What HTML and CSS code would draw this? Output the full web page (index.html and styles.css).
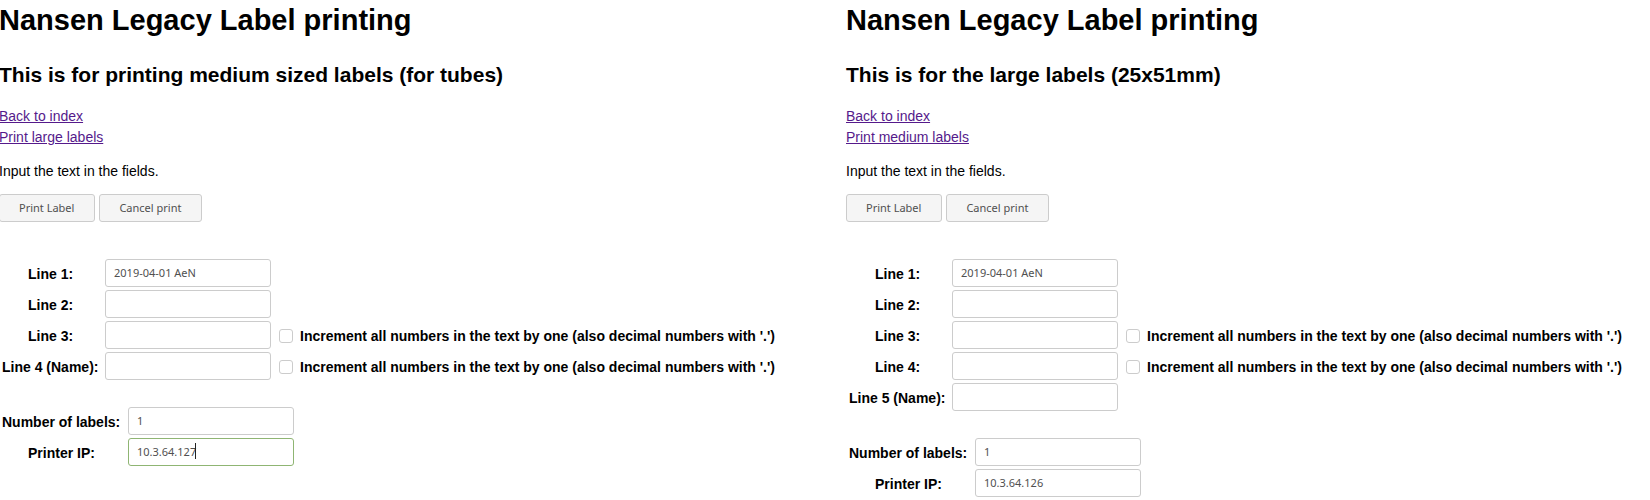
FILE: index.html
```
<!DOCTYPE html>
<html lang="en">
<head>
<meta charset="utf-8">
<title>Nansen Legacy Label printing</title>
<link rel="stylesheet" href="styles.css">
</head>
<body>
<main class="panels">
  <section class="panel">
    <h1>Nansen Legacy Label printing</h1>
    <h2>This is for printing medium sized labels (for tubes)</h2>
    <nav class="links"><a href="#index">Back to index</a><a href="#large">Print large labels</a></nav>
    <p class="intro">Input the text in the fields.</p>
    <form>
      <div class="actions"><button type="button">Print Label</button><button type="button">Cancel print</button></div>
      <table class="fields">
        <tr><th><label for="m1">Line 1:</label></th><td><input type="text" id="m1" value="2019-04-01 AeN"></td><td></td></tr>
        <tr><th><label for="m2">Line 2:</label></th><td><input type="text" id="m2"></td><td></td></tr>
        <tr><th><label for="m3">Line 3:</label></th><td><input type="text" id="m3"></td><td><label class="check"><input type="checkbox">Increment all numbers in the text by one (also decimal numbers with '.')</label></td></tr>
        <tr><th><label for="m4">Line 4 (Name):</label></th><td><input type="text" id="m4"></td><td><label class="check"><input type="checkbox">Increment all numbers in the text by one (also decimal numbers with '.')</label></td></tr>
      </table>
      <table class="fields settings">
        <tr><th><label for="mn">Number of labels:</label></th><td><input type="text" id="mn" value="1"></td></tr>
        <tr><th><label for="mip">Printer IP:</label></th><td class="active"><input type="text" id="mip" value="10.3.64.127"><span class="caret"></span></td></tr>
      </table>
    </form>
  </section>
  <section class="panel">
    <h1>Nansen Legacy Label printing</h1>
    <h2>This is for the large labels (25x51mm)</h2>
    <nav class="links"><a href="#index">Back to index</a><a href="#medium">Print medium labels</a></nav>
    <p class="intro">Input the text in the fields.</p>
    <form>
      <div class="actions"><button type="button">Print Label</button><button type="button">Cancel print</button></div>
      <table class="fields">
        <tr><th><label for="l1">Line 1:</label></th><td><input type="text" id="l1" value="2019-04-01 AeN"></td><td></td></tr>
        <tr><th><label for="l2">Line 2:</label></th><td><input type="text" id="l2"></td><td></td></tr>
        <tr><th><label for="l3">Line 3:</label></th><td><input type="text" id="l3"></td><td><label class="check"><input type="checkbox">Increment all numbers in the text by one (also decimal numbers with '.')</label></td></tr>
        <tr><th><label for="l4">Line 4:</label></th><td><input type="text" id="l4"></td><td><label class="check"><input type="checkbox">Increment all numbers in the text by one (also decimal numbers with '.')</label></td></tr>
        <tr><th><label for="l5">Line 5 (Name):</label></th><td><input type="text" id="l5"></td><td></td></tr>
      </table>
      <table class="fields settings">
        <tr><th><label for="ln">Number of labels:</label></th><td><input type="text" id="ln" value="1"></td></tr>
        <tr><th><label for="lip">Printer IP:</label></th><td><input type="text" id="lip" value="10.3.64.126"></td></tr>
      </table>
    </form>
  </section>
</main>
</body>
</html>
```
FILE: styles.css
```
* { box-sizing: border-box; }
body { margin: 0; background: #fff; color: #000; font: 14px/21px "Liberation Sans", Arial, sans-serif; }
.panels { display: grid; grid-template-columns: 846fr 804fr; }
.panel { min-width: 0; white-space: nowrap; }
.panel:first-child { margin-left: -1px; }
h1 { margin: 0; padding-top: 3px; font-size: 29px; line-height: 34px; }
h2 { margin: 25px 0 0; font-size: 21px; line-height: 26px; }
.links { display: flex; flex-direction: column; align-items: flex-start; margin-top: 18px; }
a { color: #551a8b; }
.intro { margin: 13px 0 12px; }
.actions { display: flex; gap: 4px; margin-bottom: 35px; }
button { height: 28px; padding: 0 20px 2px 19px; border: 1px solid #ccc; border-radius: 3px; background: #f5f5f5; color: #505050; font: 11px "Noto Sans", sans-serif; }
.fields { border-spacing: 2px 1px; }
.fields th, .fields td { padding: 1px; }
.fields th { min-width: 101px; text-align: left; font-weight: bold; padding: 3px 1px 1px 27px; }
.fields tr:last-child th { padding-left: 1px; }
.settings { margin-top: 23px; }
.fields.settings th { min-width: 124px; }
.fields.settings tr:first-child th { padding-left: 1px; }
.fields.settings tr:last-child th { padding-left: 27px; }
.fields td input[type="text"] { display: block; width: 166px; height: 28px; padding: 0 8px 2px; border: 1px solid #ccc; border-radius: 3px; outline: 0; background: #fff; color: #505050; font: 11px "Noto Sans", sans-serif; }
.check { display: flex; align-items: center; gap: 7px; padding: 2px 0 0 4px; font-weight: bold; }
.check input { appearance: none; width: 14px; height: 14px; margin: 0; border: 1px solid #ccc; border-radius: 3px; background: #fff; }
.active { position: relative; }
.fields .active input[type="text"] { border-color: #8fb573; }
.caret { position: absolute; left: 68px; top: 6px; width: 1px; height: 16px; background: #222; }
```
